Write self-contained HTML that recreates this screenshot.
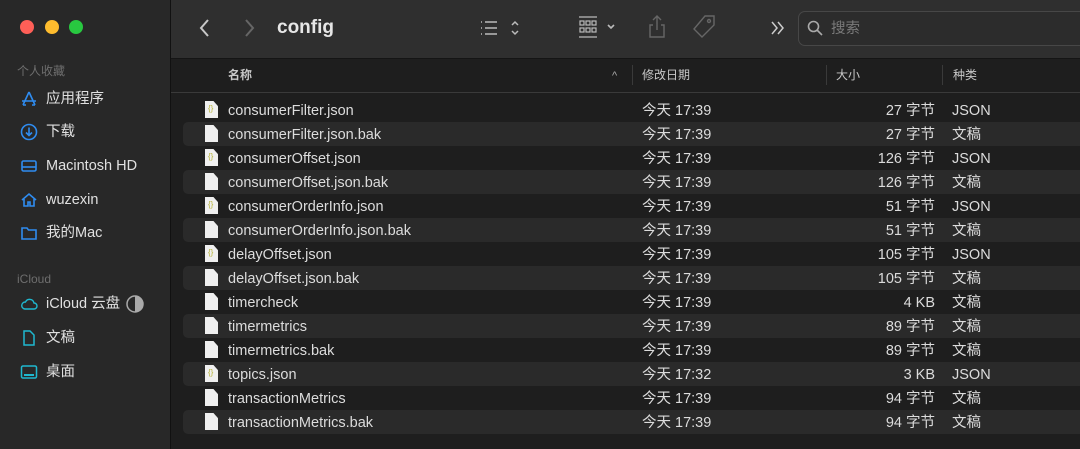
<!DOCTYPE html><html><head><meta charset="utf-8"><style>
body{margin:0;width:1080px;height:449px;overflow:hidden;background:#1e1e1e;font-family:"Liberation Sans","Noto Sans CJK SC",sans-serif;color:#dcdcdc;position:relative}
.side{position:absolute;left:0;top:0;width:170px;height:449px;background:#282828;border-right:1px solid #111}
.dot{position:absolute;top:20px;width:14px;height:14px;border-radius:50%}
.sh{position:absolute;left:17px;font-size:12px;color:#6e6e6e;line-height:14px}
.si{position:absolute;left:20px;font-size:14.5px;line-height:18px;color:#e0e0e0;display:flex;align-items:center;gap:8px}
.si svg{width:18px;height:18px}
.tb{position:absolute;left:171px;top:0;right:0;height:58px;background:#2f2f2f;border-bottom:1px solid #151515}
.hd{position:absolute;left:171px;top:59px;right:0;height:33px;border-bottom:1px solid #3a3a3a;font-size:12px;color:#c8c8c8}
.hd span{position:absolute;top:9px;line-height:14px}
.sep{position:absolute;top:6px;width:1px;height:20px;background:#3a3a3a}
.row{position:absolute;left:183px;right:0;height:24px;font-size:14.5px;border-radius:5px 0 0 5px}
.row.a{background:#2a2a2a}
.row span{position:absolute;top:5px;line-height:17px;white-space:nowrap}
.ic{position:absolute;left:22px;top:3px;width:13px;height:17px;background:#efefef;clip-path:polygon(0 0,65% 0,100% 30%,100% 100%,0 100%)}
.ic b{position:absolute;left:3px;top:4px;font-size:8px;line-height:8px;color:#b8b33a;font-weight:normal}
</style></head><body>
<div class="side">
<div class="dot" style="left:20px;background:#fe5f57"></div>
<div class="dot" style="left:45px;background:#febc2e"></div>
<div class="dot" style="left:69px;background:#28c840"></div>
<div class="sh" style="top:64px">个人收藏</div>
<div class="si" style="top:90px"><svg viewBox="0 0 18 18" fill="none" stroke="#2f8cf0" stroke-width="1.6"><path d="M9 2 3 15M9 2l6 13M2 11h14M6 15h-3M12 15h3"/></svg>应用程序</div>
<div class="si" style="top:123px"><svg viewBox="0 0 18 18" fill="none" stroke="#2f8cf0" stroke-width="1.6"><circle cx="9" cy="9" r="7.5"/><path d="M9 4.5v8M6 9.5l3 3 3-3"/></svg>下载</div>
<div class="si" style="top:157px"><svg viewBox="0 0 18 18" fill="none" stroke="#2f8cf0" stroke-width="1.6"><rect x="2" y="4" width="14" height="10" rx="1.5"/><path d="M2 10h14"/></svg>Macintosh HD</div>
<div class="si" style="top:191px"><svg viewBox="0 0 18 18" fill="none" stroke="#2f8cf0" stroke-width="1.6"><path d="M2 9 9 3l7 6M4 8v7h4v-4h2v4h4V8"/></svg>wuzexin</div>
<div class="si" style="top:224px"><svg viewBox="0 0 18 18" fill="none" stroke="#2f8cf0" stroke-width="1.6"><path d="M2 4h5l1.5 2H16v9H2z"/></svg>我的Mac</div>
<div class="sh" style="top:272px">iCloud</div>
<div class="si" style="top:295px"><svg viewBox="0 0 18 18" fill="none" stroke="#1fb8cf" stroke-width="1.4"><path d="M5 14h9a3 3 0 0 0 0-6 4.5 4.5 0 0 0-8.5-1A3.5 3.5 0 0 0 5 14z"/></svg>iCloud 云盘 <svg viewBox="0 0 18 18" style="margin-left:-2px"><circle cx="9" cy="9" r="8" fill="none" stroke="#aaa" stroke-width="1.5"/><path d="M9 1a8 8 0 0 1 0 16z" fill="#aaa"/></svg></div>
<div class="si" style="top:329px"><svg viewBox="0 0 18 18" fill="none" stroke="#1fb8cf" stroke-width="1.5"><path d="M4 2h6l4 4v10H4z"/></svg>文稿</div>
<div class="si" style="top:363px"><svg viewBox="0 0 18 18" fill="none" stroke="#1fb8cf" stroke-width="1.5"><rect x="1.5" y="3" width="15" height="12" rx="1.5"/><path d="M4 12h10" stroke-width="2"/></svg>桌面</div>
</div>
<div class="tb">
<svg style="position:absolute;left:27px;top:17px" width="14" height="22" viewBox="0 0 14 22" fill="none" stroke="#c8c8c8" stroke-width="2"><path d="M10 3 3 11l7 8"/></svg>
<svg style="position:absolute;left:71px;top:17px" width="14" height="22" viewBox="0 0 14 22" fill="none" stroke="#666" stroke-width="2"><path d="M4 3l7 8-7 8"/></svg>
<div style="position:absolute;left:106px;top:17px;font-size:19px;line-height:22px;font-weight:bold;color:#e6e6e6">config</div>
<svg style="position:absolute;left:308px;top:18px" width="46" height="20" viewBox="0 0 46 20" fill="none" stroke="#bbb" stroke-width="1.5"><path d="M2 4h1M2 10h1M2 16h1M6 4h12M6 10h12M6 16h12M33 7l3-3 3 3M33 13l3 3 3-3"/></svg>
<svg style="position:absolute;left:407px;top:15px" width="40" height="24" viewBox="0 0 40 24" fill="none" stroke="#bbb" stroke-width="1.2"><path d="M1 2h18M1 22h18"/><rect x="2" y="6" width="4" height="4"/><rect x="8" y="6" width="4" height="4"/><rect x="14" y="6" width="4" height="4"/><rect x="2" y="13" width="4" height="4"/><rect x="8" y="13" width="4" height="4"/><rect x="14" y="13" width="4" height="4"/><path d="M30 10l3 3 3-3" stroke-width="1.6"/></svg>
<svg style="position:absolute;left:476px;top:14px" width="20" height="26" viewBox="0 0 20 26" fill="none" stroke="#666" stroke-width="1.4"><path d="M10 2v14M6 6l4-4 4 4M6 11H3v12h14V11h-3"/></svg>
<svg style="position:absolute;left:520px;top:14px" width="26" height="26" viewBox="0 0 26 26" fill="none" stroke="#666" stroke-width="1.4"><path d="M14 2h9v9L11 23 3 15z"/><circle cx="18" cy="7" r="1.5"/></svg>
<svg style="position:absolute;left:598px;top:20px" width="18" height="16" viewBox="0 0 18 16" fill="none" stroke="#ccc" stroke-width="1.5"><path d="M3 2l5 6-5 6M9 2l5 6-5 6"/></svg>
<div style="position:absolute;left:627px;top:11px;right:0;height:33px;border:1px solid #474747;border-right:none;border-radius:7px 0 0 7px;background:#2c2c2c">
<svg style="position:absolute;left:8px;top:8px" width="16" height="16" viewBox="0 0 16 16" fill="none" stroke="#aaa" stroke-width="1.6"><circle cx="6.5" cy="6.5" r="5"/><path d="M10 10l5 5"/></svg>
<span style="position:absolute;left:32px;top:9px;line-height:17px;font-size:14.5px;color:#7a7a7a">搜索</span></div>
</div>
<div class="hd">
<span style="left:57px;font-weight:bold">名称</span>
<span style="left:441px;top:10px;font-size:11px;color:#aaa">^</span>
<div class="sep" style="left:461px"></div><span style="left:471px">修改日期</span>
<div class="sep" style="left:655px"></div><span style="left:665px">大小</span>
<div class="sep" style="left:771px"></div><span style="left:782px">种类</span>
</div>
<div id="rows"></div>
<script>
var d=[["consumerFilter.json","17:39","27 字节","JSON",1],["consumerFilter.json.bak","17:39","27 字节","文稿",0],["consumerOffset.json","17:39","126 字节","JSON",1],["consumerOffset.json.bak","17:39","126 字节","文稿",0],["consumerOrderInfo.json","17:39","51 字节","JSON",1],["consumerOrderInfo.json.bak","17:39","51 字节","文稿",0],["delayOffset.json","17:39","105 字节","JSON",1],["delayOffset.json.bak","17:39","105 字节","文稿",0],["timercheck","17:39","4 KB","文稿",0],["timermetrics","17:39","89 字节","文稿",0],["timermetrics.bak","17:39","89 字节","文稿",0],["topics.json","17:32","3 KB","JSON",1],["transactionMetrics","17:39","94 字节","文稿",0],["transactionMetrics.bak","17:39","94 字节","文稿",0]];
var h="";d.forEach(function(r,i){h+='<div class="row'+(i%2?' a':'')+'" style="top:'+(98+24*i)+'px"><div class="ic">'+(r[4]?'<b>{}</b>':'')+'</div><span style="left:45px">'+r[0]+'</span><span style="left:459px">今天 '+r[1]+'</span><span style="right:145px;text-align:right">'+r[2]+'</span><span style="left:769px">'+r[3]+'</span></div>'});
document.getElementById("rows").innerHTML=h;
</script>
</body></html>
